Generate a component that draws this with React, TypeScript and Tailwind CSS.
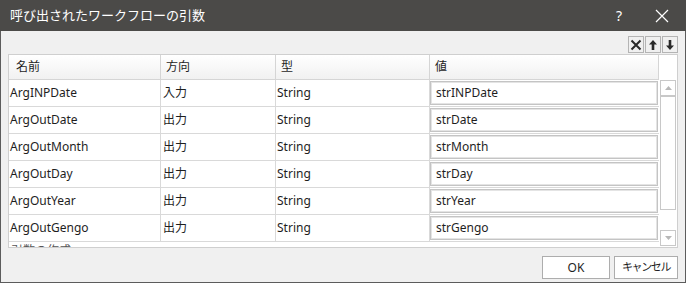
const rows = [
  { name: "ArgINPDate", dir: "入力", type: "String", value: "strINPDate" },
  { name: "ArgOutDate", dir: "出力", type: "String", value: "strDate" },
  { name: "ArgOutMonth", dir: "出力", type: "String", value: "strMonth" },
  { name: "ArgOutDay", dir: "出力", type: "String", value: "strDay" },
  { name: "ArgOutYear", dir: "出力", type: "String", value: "strYear" },
  { name: "ArgOutGengo", dir: "出力", type: "String", value: "strGengo" },
];

const font = {
  fontFamily: '"Noto Sans", "Noto Sans CJK JP", sans-serif',
};

function ToolButton({ children }: { children: React.ReactNode }) {
  return (
    <div className="flex h-[17px] w-[16px] items-center justify-center border border-[#b4b4b4] bg-[#f0f0f0]">
      {children}
    </div>
  );
}

export default function App() {
  return (
    <div
      className="flex h-[283px] w-[686px] flex-col overflow-hidden text-[12px] text-[#1e1e1e]"
      style={font}
    >
      {/* title bar */}
      <div className="flex h-[31px] shrink-0 items-center bg-[#4b4a48] pl-[10px] text-white">
        <span className="text-[13px]">呼び出されたワークフローの引数</span>
        <span className="ml-auto mr-[33px] text-[14px]">?</span>
        <svg width="14" height="14" viewBox="0 0 14 14" className="mr-[17px]">
          <path d="M1 1 L13 13 M13 1 L1 13" stroke="#ffffff" strokeWidth="1.2" />
        </svg>
      </div>

      <div className="flex flex-1 flex-col border-x border-b border-[#5c5c5c] bg-[#f0f0f0] px-[7px]">
        {/* toolbar */}
        <div className="flex h-[23px] items-end justify-end gap-px pb-[1px]">
          <ToolButton>
            <svg width="12" height="12" viewBox="0 0 12 12">
              <path d="M1.5 1.5 L10.5 10.5 M10.5 1.5 L1.5 10.5" stroke="#2a2a2a" strokeWidth="2" />
            </svg>
          </ToolButton>
          <ToolButton>
            <svg width="10" height="12" viewBox="0 0 10 12">
              <path d="M5 1 L9 5.5 H6.3 V11 H3.7 V5.5 H1 Z" fill="#2a2a2a" />
            </svg>
          </ToolButton>
          <ToolButton>
            <svg width="10" height="12" viewBox="0 0 10 12">
              <path d="M5 11 L9 6.5 H6.3 V1 H3.7 V6.5 H1 Z" fill="#2a2a2a" />
            </svg>
          </ToolButton>
        </div>

        {/* grid */}
        <div className="flex flex-col border border-[#cfcfcf] bg-white">
          <div className="flex h-[25px]">
            <div className="grid w-[650px] grid-cols-[152px_115px_154px_229px] border-b border-[#d5d5d5] bg-gradient-to-b from-white to-[#f1f1f1]">
              <div className="flex items-center border-r border-[#d5d5d5] pl-[7px]">名前</div>
              <div className="flex items-center border-r border-[#d5d5d5] pl-[5px]">方向</div>
              <div className="flex items-center border-r border-[#d5d5d5] pl-[5px]">型</div>
              <div className="flex items-center border-r border-[#d5d5d5] pl-[5px]">値</div>
            </div>
            <div className="flex-1" />
          </div>

          <div className="flex h-[167px]">
            <div className="w-[650px] overflow-hidden">
              {rows.map((r) => (
                <div
                  key={r.name}
                  className="grid h-[27px] grid-cols-[152px_115px_154px_229px] border-b border-[#d9d9d9]"
                >
                  <div className="flex items-center border-r border-[#d9d9d9] pl-[1px]">{r.name}</div>
                  <div className="flex items-center border-r border-[#d9d9d9] pl-[2px]">{r.dir}</div>
                  <div className="flex items-center border-r border-[#d9d9d9] pl-[1px]">{r.type}</div>
                  <div className="flex items-center py-[1px] pr-[1px]">
                    <div className="flex h-full w-full items-center border border-[#c4c4c4] pl-[5px] shadow-[inset_0_0_0_1px_#e4e4e4]">
                      {r.value}
                    </div>
                  </div>
                </div>
              ))}
              <div className="grid h-[27px] grid-cols-[152px_115px_154px_229px]">
                <div className="pl-[2px] text-[#555]">引数の作成</div>
              </div>
            </div>

            {/* scrollbar */}
            <div className="flex flex-1 flex-col px-[1px] pb-[1px]">
              <div className="flex h-[16px] items-center justify-center border border-[#c8c8c8] bg-white">
                <svg width="7" height="4" viewBox="0 0 7 4">
                  <path d="M0 4 L3.5 0 L7 4 Z" fill="#b8b8b8" />
                </svg>
              </div>
              <div className="h-[114px] border border-[#c8c8c8] bg-white" />
              <div className="flex-1" />
              <div className="flex h-[16px] items-center justify-center border border-[#c8c8c8] bg-white">
                <svg width="7" height="4" viewBox="0 0 7 4">
                  <path d="M0 0 L3.5 4 L7 0 Z" fill="#b8b8b8" />
                </svg>
              </div>
            </div>
          </div>
        </div>

        {/* footer */}
        <div className="flex flex-1 items-start justify-end gap-[4px] pt-[8px]">
          <button className="flex h-[23px] w-[68px] items-center justify-center border border-[#adadad] bg-white">
            OK
          </button>
          <button className="flex h-[23px] w-[64px] items-center justify-center whitespace-nowrap border border-[#adadad] bg-white text-[11px] tracking-[-1.4px]">
            キャンセル
          </button>
        </div>
      </div>
    </div>
  );
}
